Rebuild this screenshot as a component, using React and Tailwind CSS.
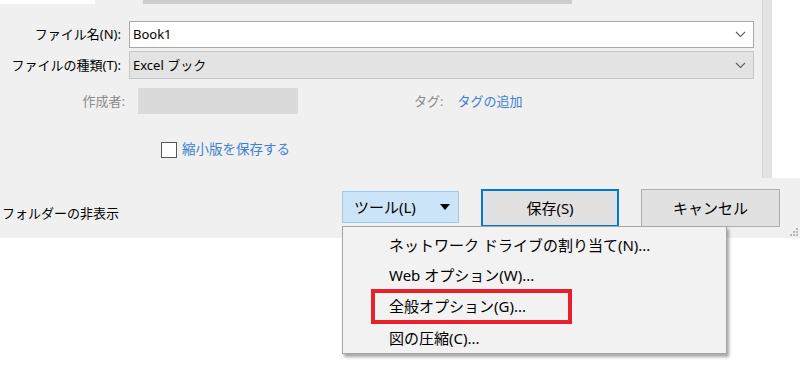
import React from "react";

const Chevron = () => (
  <svg width="11" height="7" viewBox="0 0 11 7" className="shrink-0">
    <path d="M1 1 L5.5 5.5 L10 1" fill="none" stroke="#606060" strokeWidth="1.1" />
  </svg>
);

const menuItems = [
  { label: "ネットワーク ドライブの割り当て(N)...", h: "h-[31px]" },
  { label: "Web オプション(W)...", h: "h-[28px]" },
  { label: "全般オプション(G)...", h: "h-[34px]", marked: true },
  { label: "図の圧縮(C)...", h: "h-[30px]" },
];

const App = () => {
  return (
    <div
      className="relative w-[800px] h-[381px] bg-white overflow-hidden text-[13px] text-black"
      style={{ fontFamily: "'Noto Sans', 'Noto Sans CJK JP', sans-serif" }}
    >
      {/* upper dialog panel */}
      <div className="flex h-[178px]">
        <div className="w-[762px] bg-[#f0f0f0] flex flex-col">
          <div className="flex h-[4px]">
            <div className="w-[95px] bg-white" />
            <div className="w-[48px]" />
            <div className="w-[429px] bg-[#cdcdcd]" />
          </div>

          {/* file name */}
          <div className="flex items-center mt-[17px] h-[27px]">
            <div className="w-[122px] text-right pr-[1px] leading-none">ファイル名(N):</div>
            <div className="ml-[7px] w-[625px] h-full bg-white border border-[#a8a8a8] flex items-center justify-between pl-[3px] pr-[7px]">
              <span className="leading-none">Book1</span>
              <Chevron />
            </div>
          </div>

          {/* file type */}
          <div className="flex items-center mt-[3px] h-[28px]">
            <div className="w-[122px] text-right pr-[1px] leading-none">ファイルの種類(T):</div>
            <div className="ml-[7px] w-[625px] h-full bg-[#e3e3e3] border border-[#c6c6c6] flex items-center justify-between pl-[3px] pr-[7px]">
              <span className="leading-none">Excel ブック</span>
              <Chevron />
            </div>
          </div>

          {/* author / tags */}
          <div className="flex items-center mt-[9px] h-[26px]">
            <div className="w-[125px] text-right text-[#8c8c8c] leading-none">作成者:</div>
            <div className="ml-[13px] w-[160px] h-full bg-[#dadada]" />
            <div className="ml-[116px] text-[#8c8c8c] leading-none">タグ:</div>
            <div className="ml-[14px] text-[#3d7fd4] leading-none">タグの追加</div>
          </div>

          {/* thumbnail */}
          <div className="flex items-center mt-[28px] ml-[161px] h-[16px]">
            <div className="w-[16px] h-[16px] bg-white border border-[#555555]" />
            <div className="ml-[5px] text-[#3d7fd4] leading-none text-[13.5px]">縮小版を保存する</div>
          </div>
        </div>
        <div className="w-[10px] bg-[#e2e2e2] border-l border-[#d6d6d6]" />
        <div className="flex-1 bg-white" />
      </div>

      {/* bottom bar */}
      <div className="relative h-[60px] bg-[#f0f0f0] flex items-start">
        <div className="mt-[29px] ml-[2px] w-[340px] leading-none">フォルダーの非表示</div>
        <div className="mt-[13px] w-[117px] h-[32px] bg-[#cce4f7] border border-[#99c9ef] flex items-center justify-between pl-[11px] pr-[8px] text-[15px]">
          <span className="leading-none">ツール(L)</span>
          <svg width="10" height="6" viewBox="0 0 10 6">
            <path d="M0 0 H10 L5 6 Z" fill="#000" />
          </svg>
        </div>
        <div className="ml-[22px] mt-[11px] w-[138px] h-[38px] bg-[#e1e1e1] border-2 border-[#0078d7] flex items-center justify-center text-[15px]">
          保存(S)
        </div>
        <div className="ml-[22px] mt-[11px] w-[139px] h-[38px] bg-[#e1e1e1] border border-[#adadad] flex items-center justify-center text-[15px]">
          キャンセル
        </div>
        {/* resize grip */}
        <svg width="10" height="10" viewBox="0 0 10 10" className="absolute right-[1px] bottom-[1px]">
          <rect x="7" y="1" width="2" height="2" fill="#b8b8b8" />
          <rect x="4" y="4" width="2" height="2" fill="#b8b8b8" />
          <rect x="7" y="4" width="2" height="2" fill="#b8b8b8" />
          <rect x="1" y="7" width="2" height="2" fill="#b8b8b8" />
          <rect x="4" y="7" width="2" height="2" fill="#b8b8b8" />
          <rect x="7" y="7" width="2" height="2" fill="#b8b8b8" />
        </svg>
      </div>

      {/* tools dropdown menu */}
      <div className="absolute left-[342px] top-[226px] w-[385px] h-[128px] bg-[#f2f2f2] border border-[#a6a6a6] shadow-[2px_3px_3px_rgba(0,0,0,0.35)] pt-[3px] text-[15px]">
        {menuItems.map((item) => (
          <div key={item.label} className={`${item.h} flex items-center pl-[46px]`}>
            {item.marked ? (
              <div className="-ml-[18px] w-[201px] h-[35px] border-4 border-[#e8202a] flex items-center pl-[14px]">
                <span className="leading-none">{item.label}</span>
              </div>
            ) : (
              <span className="leading-none">{item.label}</span>
            )}
          </div>
        ))}
      </div>
    </div>
  );
};

export default App;
